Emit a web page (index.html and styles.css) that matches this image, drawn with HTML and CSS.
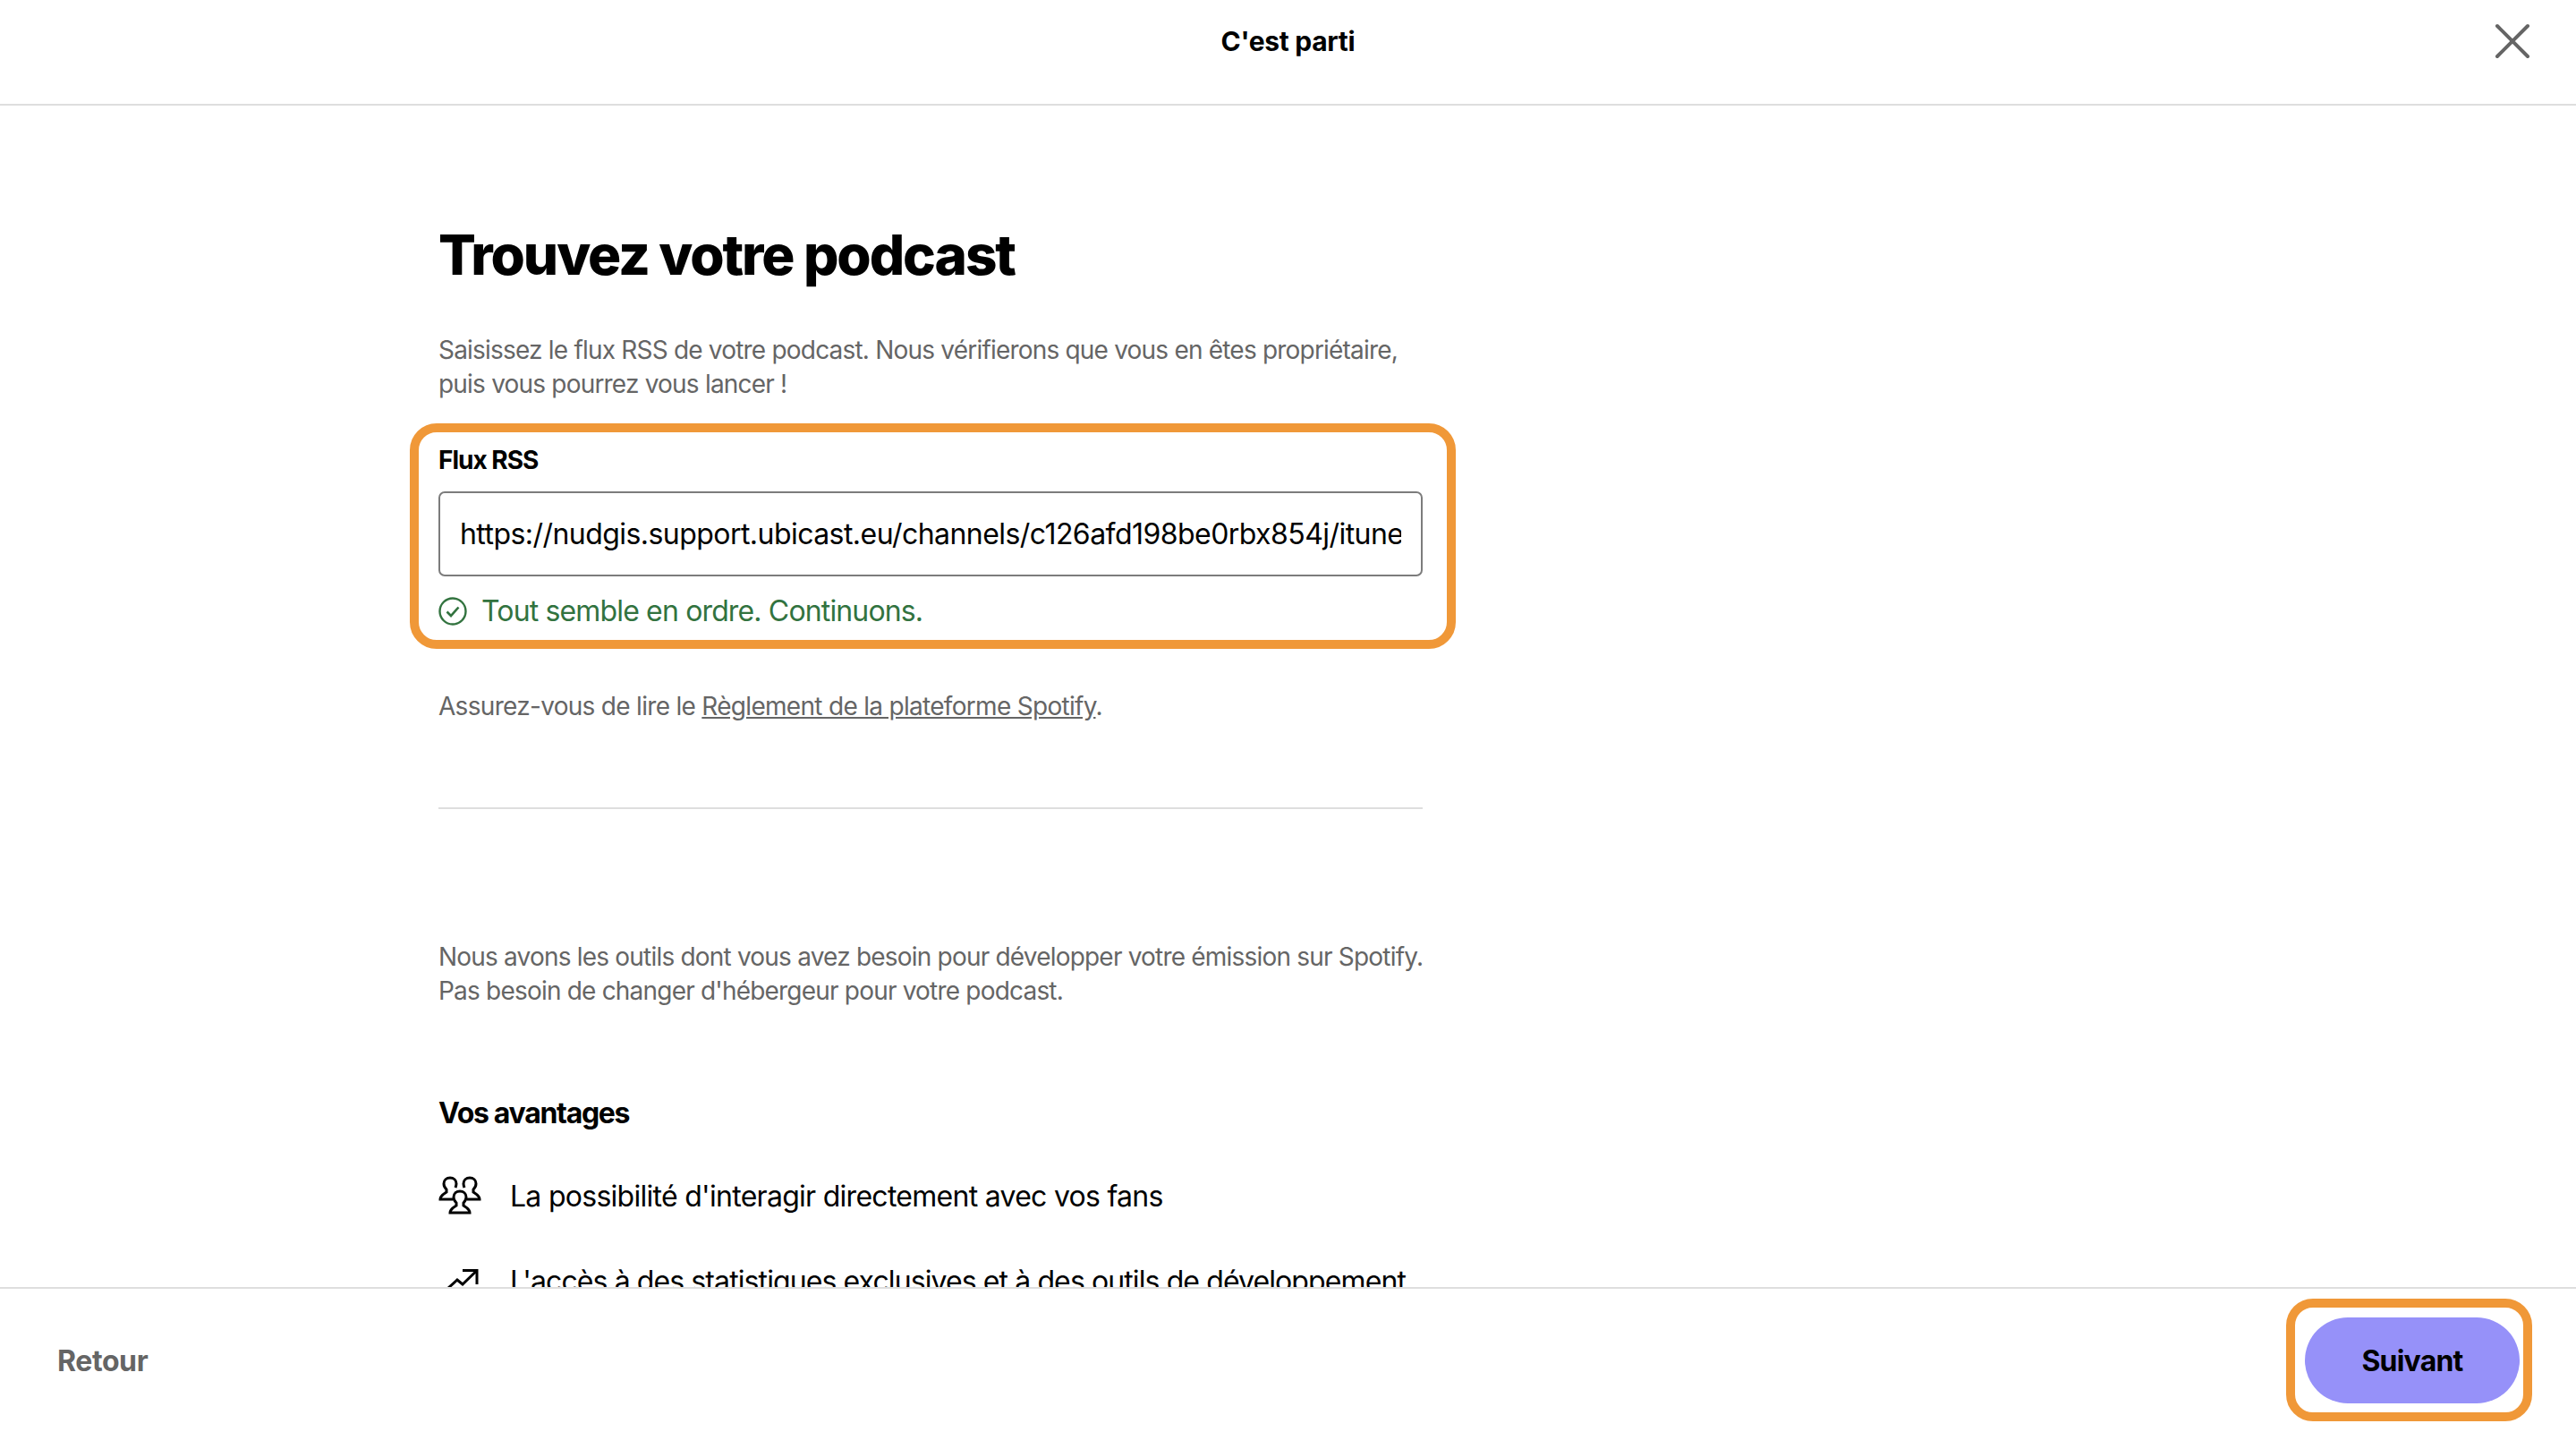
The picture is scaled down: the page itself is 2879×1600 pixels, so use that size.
FILE: index.html
```html
<!DOCTYPE html>
<html lang="fr">
<head>
  <meta charset="UTF-8" />
  <title>C'est parti</title>
  <link rel="stylesheet" href="styles.css">
</head>
<body>

  <header class="topbar">
    <div class="topbar-title">C'est parti</div>
    <button class="close" aria-label="Fermer">
      <svg width="40" height="40" viewBox="0 0 40 40"><path d="M3 3 L37 37 M37 3 L3 37" stroke="#656565" stroke-width="4" stroke-linecap="round" fill="none"/></svg>
    </button>
  </header>

  <main class="content">
    <div class="column">
      <h1>Trouvez votre podcast</h1>
      <p class="intro">Saisissez le flux RSS de votre podcast. Nous vérifierons que vous en êtes propriétaire,<br>puis vous pourrez vous lancer !</p>

      <div class="field">
        <label for="rss">Flux RSS</label>
        <input type="text" id="rss" value="https://nudgis.support.ubicast.eu/channels/c126afd198be0rbx854j/itunes" />
        <div class="status">
          <svg width="32" height="32" viewBox="0 0 32 32"><circle cx="16" cy="16" r="14.5" stroke="#32733f" stroke-width="2.4" fill="none"/><path d="M9.5 16.5 L14 21 L22.5 11.5" stroke="#32733f" stroke-width="2.6" fill="none"/></svg>
          <span>Tout semble en ordre. Continuons.</span>
        </div>
        <div class="highlight"></div>
      </div>

      <p class="policy">Assurez-vous de lire le <a href="#">Règlement de la plateforme Spotify</a>.</p>

      <hr class="divider">

      <p class="tools">Nous avons les outils dont vous avez besoin pour développer votre émission sur Spotify.<br>Pas besoin de changer d'hébergeur pour votre podcast.</p>

      <h2>Vos avantages</h2>

      <ul class="perks">
        <li>
          <svg width="48" height="44" viewBox="0 0 48 44" fill="none" stroke="#000" stroke-width="3">
            <path d="M16 26 H2 C2 22 6 20 9 18 V15 C7 13 6 11 6 8.5 C6 4.5 9 2 13 2 C17 2 20 4.5 20 8.5 C20 10 19.5 11.5 19 13"/>
            <path d="M32 26 H46 C46 22 42 20 39 18 V15 C41 13 42 11 42 8.5 C42 4.5 39 2 35 2 C31 2 28 4.5 28 8.5 C28 10 28.5 11.5 29 13"/>
            <path d="M13 41 C13 37 17 35 20 33 V30 C18 28 17 26 17 23.5 C17 19.5 20 17 24 17 C28 17 31 19.5 31 23.5 C31 26 30 28 28 30 V33 C31 35 35 37 35 41 Z"/>
          </svg>
          <span>La possibilité d'interagir directement avec vos fans</span>
        </li>
        <li class="perk-long">
          <svg width="48" height="44" viewBox="0 0 48 44" fill="none" stroke="#000" stroke-width="3">
            <path d="M27 10.5 H43 V26 M43 10.5 L27 26 L21 21 L10 31"/>
          </svg>
          <span>L'accès à des statistiques exclusives et à des outils de développement</span>
        </li>
      </ul>
    </div>
  </main>

  <footer class="bottombar">
    <a class="back" href="#">Retour</a>
    <div class="next-wrap">
      <button class="next">Suivant</button>
      <div class="highlight"></div>
    </div>
  </footer>

</body>
</html>
```

FILE: styles.css
```css
* {
  box-sizing: border-box;
}

body {
  margin: 0;
  height: 100vh;
  display: flex;
  flex-direction: column;
  background-color: #fff;
  color: #000;
  font-family: Inter, "Liberation Sans", sans-serif;
  overflow: hidden;
}

/* Top bar */
.topbar {
  height: 118px;
  flex-shrink: 0;
  display: flex;
  align-items: center;
  justify-content: center;
  padding-bottom: 24px;
  border-bottom: 2px solid #dedede;
  position: relative;
}

.topbar-title {
  font-size: 30px;
  font-weight: 700;
  letter-spacing: -0.3px;
}

.close {
  position: absolute;
  top: 26px;
  right: 51px;
  width: 40px;
  height: 40px;
  padding: 0;
  border: none;
  background: none;
}

.close svg {
  display: block;
}

/* Scrolling content */
.content {
  flex: 1;
  overflow: hidden;
  padding-left: 490px;
}

.column {
  width: 1100px;
}

h1 {
  margin: 0;
  padding-top: 128px;
  font-size: 62px;
  line-height: 78px;
  font-weight: 800;
  letter-spacing: -2.1px;
}

p {
  margin: 0;
  font-size: 28px;
  line-height: 38px;
  color: #656565;
  letter-spacing: -0.7px;
  white-space: nowrap;
}

.intro {
  margin-top: 48px;
  letter-spacing: -0.8px;
}

.field {
  position: relative;
  margin-top: 47px;
}

.field label {
  display: block;
  font-size: 28px;
  line-height: 38px;
  font-weight: 700;
  letter-spacing: -1px;
}

.field input {
  display: block;
  width: 100%;
  height: 95px;
  margin-top: 16px;
  padding: 0 22px;
  border: 2px solid #7c7c7c;
  border-radius: 7px;
  font-family: inherit;
  font-size: 32px;
  color: #000;
  letter-spacing: -0.55px;
}

.status {
  display: flex;
  align-items: center;
  gap: 16px;
  margin-top: 23px;
  font-size: 32px;
  line-height: 32px;
  color: #32733f;
  letter-spacing: -0.85px;
}

.status svg {
  flex-shrink: 0;
}

.highlight {
  position: absolute;
  border: 10px solid #f09838;
  border-radius: 30px;
  pointer-events: none;
}

.field .highlight {
  top: -22px;
  left: -32px;
  right: -37px;
  bottom: -26px;
}

.policy {
  margin-top: 71px;
}

.policy a {
  color: #656565;
}

.divider {
  margin: 94px 0 0;
  border: none;
  border-top: 2px solid #dedede;
}

.tools {
  margin-top: 146px;
  letter-spacing: -0.8px;
}

h2 {
  margin: 98px 0 0;
  font-size: 32px;
  line-height: 40px;
  font-weight: 700;
  letter-spacing: -1.3px;
}

.perks {
  list-style: none;
  margin: 48px 0 0;
  padding: 0;
}

.perks li {
  display: flex;
  align-items: center;
  gap: 32px;
  height: 48px;
  margin-bottom: 47px;
  font-size: 32px;
  letter-spacing: -0.72px;
  white-space: nowrap;
}

.perks .perk-long {
  letter-spacing: -0.9px;
}

.perks svg {
  flex-shrink: 0;
}

/* Bottom bar */
.bottombar {
  height: 162px;
  flex-shrink: 0;
  display: flex;
  align-items: center;
  justify-content: space-between;
  padding: 0 63px 0 64px;
  border-top: 2px solid #dedede;
}

.back {
  font-size: 32px;
  font-weight: 700;
  color: #656565;
  text-decoration: none;
  letter-spacing: -0.4px;
}

.next-wrap {
  position: relative;
}

.next {
  display: block;
  width: 240px;
  height: 96px;
  border: none;
  border-radius: 48px;
  background-color: #9691f9;
  color: #000;
  font-family: inherit;
  font-size: 32px;
  font-weight: 700;
  letter-spacing: -0.8px;
}

.next-wrap .highlight {
  top: -21px;
  left: -21px;
  right: -14px;
  bottom: -20px;
}
```
